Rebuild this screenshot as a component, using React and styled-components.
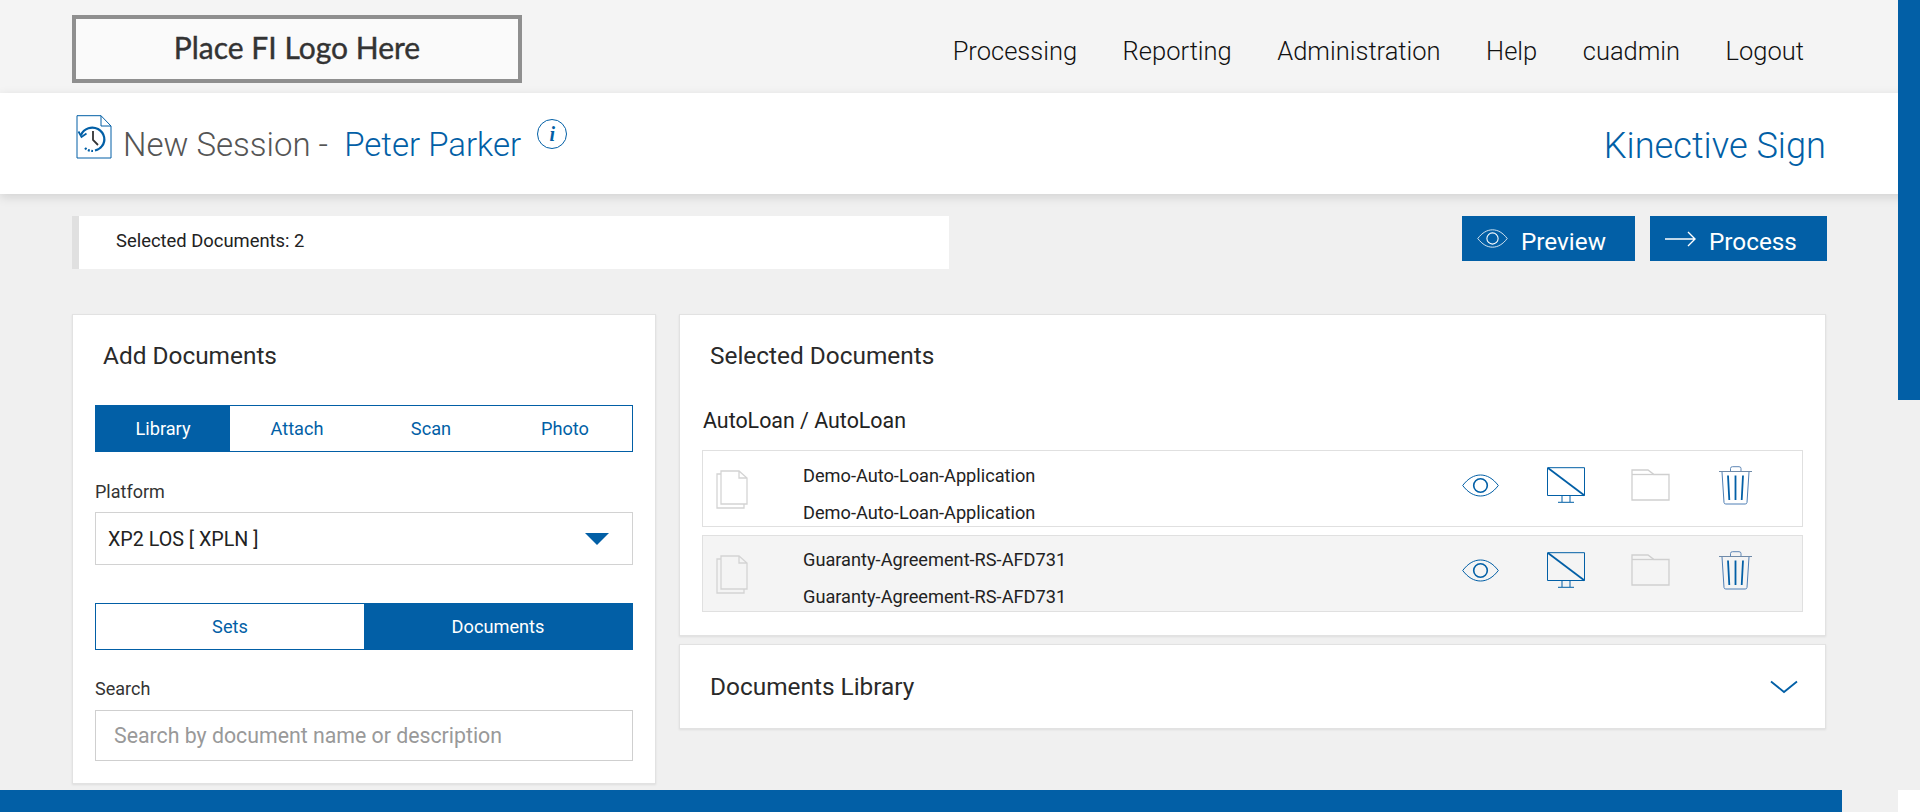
import React from "react";
import styled, { createGlobalStyle } from "styled-components";

const BLUE = "#025fa6";

const Global = createGlobalStyle`
  html, body { margin: 0; padding: 0; height: 100%; overflow: hidden; background: #f0f0f0; }
  body { font-family: Roboto, "Liberation Sans", sans-serif; color: #222; }
  * { box-sizing: border-box; }
`;

const Page = styled.div`
  display: flex;
  flex-direction: column;
  height: 812px;
  overflow: hidden;
`;
const TopBar = styled.header`
  height: 93px;
  flex: none;
  background: #f4f4f4;
  display: flex;
  align-items: center;
  justify-content: space-between;
  padding: 0 116px 0 72px;
`;
const Logo = styled.div`
  width: 450px;
  height: 68px;
  border: 4px solid #8f8f8f;
  background: #fafafa;
  display: flex;
  align-items: center;
  justify-content: center;
  font-family: Lato, sans-serif;
  font-size: 30px;
  font-weight: 400;
  color: #333;
  -webkit-text-stroke: 0.4px #333;
  margin-top: 4px;
  padding-bottom: 4px;
`;
const Nav = styled.nav`
  display: flex;
  gap: 45.5px;
  margin-top: 8px;
`;
const NavLink = styled.a`
  font-size: 25.5px;
  font-weight: 300;
  color: #111;
  line-height: 30px;
`;
const Header = styled.div`
  height: 101px;
  flex: none;
  background: #fff;
  box-shadow: 0 3px 10px rgba(0, 0, 0, 0.13);
  display: flex;
  justify-content: space-between;
  padding: 0 94px 0 76px;
  position: relative;
`;
const HeaderLeft = styled.div`
  display: flex;
  align-items: flex-start;
`;
const Title = styled.h1`
  margin: 32px 0 0 11px;
  font-size: 33px;
  line-height: 40px;
  font-weight: 300;
  color: #555;
  white-space: pre;
`;
const TitleName = styled.span`
  color: ${BLUE};
  font-weight: 300;
`;
const InfoBadge = styled.span`
  width: 30px;
  height: 30px;
  margin: 26px 0 0 16px;
  border: 1px solid ${BLUE};
  border-radius: 50%;
  display: flex;
  align-items: center;
  justify-content: center;
  font-family: "Liberation Serif", serif;
  font-style: italic;
  font-weight: 700;
  font-size: 20px;
  color: ${BLUE};
`;
const Product = styled.div`
  font-size: 36.2px;
  line-height: 40px;
  font-weight: 300;
  color: ${BLUE};
  margin-top: 33px;
`;
const Main = styled.main`
  flex: 1;
  padding: 22px 94px 0 72px;
`;
const ActionRow = styled.div`
  display: flex;
  justify-content: space-between;
  align-items: flex-start;
  height: 53px;
`;
const SelectedBar = styled.div`
  width: 877px;
  height: 53px;
  background: #fff;
  border-left: 7px solid #e0e0e0;
  padding-left: 37px;
  font-size: 18.4px;
  font-weight: 400;
  line-height: 49px;
  color: #222;
`;
const Actions = styled.div`
  display: flex;
  gap: 15px;
  margin-right: -1px;
`;
const ActionButton = styled.button`
  width: ${(p) => p.$w}px;
  height: 45px;
  border: 0;
  background: ${BLUE};
  color: #fff;
  font: 400 24.3px Roboto, sans-serif;
  display: flex;
  align-items: center;
  padding: 6px 0 0 15px;
  gap: ${(p) => p.$gap}px;
`;
const ButtonIcon = styled.span`
  display: flex;
  margin-top: -6px;
`;
const Columns = styled.div`
  display: flex;
  gap: 23px;
  margin-top: 45px;
  align-items: flex-start;
`;
const Card = styled.section`
  background: #fff;
  border: 1px solid #e2e2e2;
  box-shadow: 0 1px 2px rgba(0, 0, 0, 0.08);
`;
const LeftCard = styled(Card)`
  width: 584px;
  height: 470px;
  flex: none;
  padding: 0 22px;
`;
const RightColumn = styled.div`
  flex: 1;
  display: flex;
  flex-direction: column;
  gap: 8px;
`;
const SelectedCard = styled(Card)`
  height: 322px;
  padding: 0 22px;
`;
const CardTitle = styled.h2`
  margin: 24px 0 0 ${(p) => p.$indent}px;
  font-size: 24.4px;
  line-height: 34px;
  font-weight: 400;
  color: #2a2a2a;
`;
const Tabs = styled.div`
  display: flex;
  height: ${(p) => p.$h}px;
  border: 1px solid ${BLUE};
  margin-top: ${(p) => p.$mt}px;
`;
const Tab = styled.div`
  flex: 1;
  display: flex;
  align-items: center;
  justify-content: center;
  font-size: 18.2px;
  color: ${(p) => (p.$active ? "#fff" : BLUE)};
  background: ${(p) => (p.$active ? BLUE : "#fff")};
`;
const FieldLabel = styled.div`
  font-size: 18px;
  line-height: 24px;
  color: #333;
  margin-top: ${(p) => p.$mt}px;
`;
const SelectBox = styled.div`
  height: 53px;
  margin-top: 8px;
  border: 1px solid #d2d2d2;
  display: flex;
  align-items: center;
  justify-content: space-between;
  padding: 1px 23px 0 12px;
  font-size: 19.7px;
  color: #222;
`;
const Caret = styled.span`
  width: 0;
  height: 0;
  border-left: 12px solid transparent;
  border-right: 12px solid transparent;
  border-top: 12px solid ${BLUE};
`;
const SearchBox = styled.div`
  height: 51px;
  margin-top: 9px;
  border: 1px solid #cfcfcf;
  display: flex;
  align-items: center;
  padding-left: 18px;
  font-size: 21.3px;
  color: #999;
`;
const Group = styled.div`
  font-size: 21.4px;
  line-height: 30px;
  color: #222;
  margin: 33px 0 0 1px;
`;
const DocList = styled.div`
  display: flex;
  flex-direction: column;
  gap: 8px;
  margin-top: 14px;
`;
const DocRow = styled.div`
  height: 77px;
  display: flex;
  align-items: flex-start;
  border: 1px solid #e0e0e0;
  background: ${(p) => (p.$alt ? "#f4f4f4" : "#fff")};
  padding-right: 24px;
`;
const DocGlyph = styled.svg`
  width: 32px;
  height: 39px;
  margin: 19px 0 0 13px;
  flex: none;
`;
const DocText = styled.div`
  margin-left: 55px;
  padding-top: ${(p) => (p.$alt ? 5 : 6)}px;
  font-size: 18.2px;
  line-height: 37px;
  color: #222;
`;
const IconGroup = styled.div`
  margin-left: auto;
  display: flex;
  padding-top: 14px;
`;
const IconCell = styled.div`
  width: 85px;
  height: 40px;
  display: flex;
  align-items: center;
  justify-content: center;
`;
const LibraryCard = styled(Card)`
  height: 85px;
  display: flex;
  align-items: center;
  justify-content: space-between;
  padding: 0 27px 0 30px;
`;
const LibraryTitle = styled.h2`
  margin: 0;
  font-size: 24.4px;
  font-weight: 400;
  color: #2a2a2a;
`;
const Footer = styled.footer`
  position: fixed;
  left: 0;
  bottom: 0;
  width: 1842px;
  height: 22px;
  background: ${BLUE};
`;
const ScrollThumb = styled.div`
  position: fixed;
  top: 0;
  right: 0;
  width: 22px;
  height: 400px;
  background: ${BLUE};
`;
const Corner = styled.div`
  position: fixed;
  right: 0;
  bottom: 0;
  width: 22px;
  height: 22px;
  background: #fff;
`;

const HistoryIcon = () => (
  <svg width="36" height="44" viewBox="0 0 36 44" fill="none" style={{ marginTop: 22, flex: "none" }}>
    <path d="M1 .7H25L35 11V43H1Z M25 .7V11H35" stroke={BLUE} strokeWidth="1" fill="#fff" />
    <path d="M5 20C8 13 16 11 22 14C29 18 30 26 26 31C24 34 21 35 19 35.500" stroke={BLUE} strokeWidth="2.200" />
    <path d="M9 33C11 35 14 36 17 36" stroke={BLUE} strokeWidth="2.200" strokeDasharray="2 1.500" />
    <path d="M2.500 16.500L5.500 22L10.500 18.500" stroke={BLUE} strokeWidth="1.800" />
    <path d="M17 16V25L22 30" stroke="#333" strokeWidth="1.800" />
  </svg>
);
const EyeIcon = ({ stroke = BLUE, w = 37, h = 23, r = 1.6 }) => (
  <svg width={w} height={h} viewBox="0 0 37 23" fill="none">
    <path d="M.7 11.500C6 4.500 12 1 18.500 1S31 4.500 36.300 11.500C31 18.500 25 22 18.500 22S6 18.500 .7 11.500Z" stroke={stroke} strokeWidth="1" />
    <circle cx="18.500" cy="11.500" r="6.800" stroke={stroke} strokeWidth={r} />
  </svg>
);
const MonitorIcon = () => (
  <svg width="38" height="36" viewBox="0 0 38 36" fill="none">
    <path d="M.5.7H37.500V28.500H.5Z" stroke={BLUE} strokeWidth="1" />
    <path d="M1 1L37.500 28.500" stroke={BLUE} strokeWidth="1.800" />
    <path d="M15 28.500V35M23 28.500V35M11 35.300H27" stroke={BLUE} strokeWidth="1" />
  </svg>
);
const FolderIcon = () => (
  <svg width="39" height="32" viewBox="0 0 39 32" fill="none" stroke="#cfcfcf" strokeWidth="1.300">
    <path d="M1 31V1H17L23 5.500H38V31Z" />
    <path d="M1 5.500H23" />
  </svg>
);
const TrashIcon = () => (
  <svg width="33" height="39" viewBox="0 0 33 39" fill="none">
    <path d="M11.500 5.500V2.500Q11.500 .7 13.500 .7H20Q22 .7 22 2.500V5.500" stroke="#5f87b5" strokeWidth="1" />
    <path d="M0 5.500H33" stroke="#6f8aa8" strokeWidth="1.200" />
    <path d="M3 6L5 36.500Q5.200 38 6.800 38H26.200Q27.800 38 28 36.500L30 6" stroke="#4f7fb5" strokeWidth="1" />
    <path d="M9 9.500L10.300 34M16.500 9.500V34M24 9.500L22.700 34" stroke={BLUE} strokeWidth="1.800" />
  </svg>
);
const ArrowIcon = () => (
  <svg width="31" height="16" viewBox="0 0 31 16" fill="none" stroke="#fff" strokeWidth="1.400">
    <path d="M0 8H30M23 1L30 8L23 15" />
  </svg>
);
const Pages = () => (
  <DocGlyph viewBox="0 0 32 39" fill="none" stroke="#d4d4d4" strokeWidth="1.300">
    <path d="M5 4H1V38H28V34" />
    <path d="M5 34V1H23L31 8V34Z M23 1V8H31" fill="transparent" />
  </DocGlyph>
);

const docs = [
  { name: "Demo-Auto-Loan-Application", alt: false },
  { name: "Guaranty-Agreement-RS-AFD731", alt: true },
];

export default function App() {
  return (
    <Page>
      <Global />
      <TopBar>
        <Logo>Place FI Logo Here</Logo>
        <Nav>
          {["Processing", "Reporting", "Administration", "Help", "cuadmin", "Logout"].map((n) => (
            <NavLink key={n}>{n}</NavLink>
          ))}
        </Nav>
      </TopBar>
      <Header>
        <HeaderLeft>
          <HistoryIcon />
          <Title>
            New Session -  <TitleName>Peter Parker</TitleName>
          </Title>
          <InfoBadge>i</InfoBadge>
        </HeaderLeft>
        <Product>Kinective Sign</Product>
      </Header>
      <Main>
        <ActionRow>
          <SelectedBar>Selected Documents: 2</SelectedBar>
          <Actions>
            <ActionButton $w={173} $gap={13}>
              <ButtonIcon><EyeIcon stroke="#fff" w={31} h={19} r={1.3} /></ButtonIcon>
              Preview
            </ActionButton>
            <ActionButton $w={177} $gap={13}>
              <ButtonIcon><ArrowIcon /></ButtonIcon>
              Process
            </ActionButton>
          </Actions>
        </ActionRow>
        <Columns>
          <LeftCard>
            <CardTitle $indent={8}>Add Documents</CardTitle>
            <Tabs $h={47} $mt={32}>
              <Tab $active>Library</Tab>
              <Tab>Attach</Tab>
              <Tab>Scan</Tab>
              <Tab>Photo</Tab>
            </Tabs>
            <FieldLabel $mt={28}>Platform</FieldLabel>
            <SelectBox>
              XP2 LOS [ XPLN ]
              <Caret />
            </SelectBox>
            <Tabs $h={47} $mt={38}>
              <Tab>Sets</Tab>
              <Tab $active>Documents</Tab>
            </Tabs>
            <FieldLabel $mt={27}>Search</FieldLabel>
            <SearchBox>Search by document name or description</SearchBox>
          </LeftCard>
          <RightColumn>
            <SelectedCard>
              <CardTitle $indent={8}>Selected Documents</CardTitle>
              <Group>AutoLoan / AutoLoan</Group>
              <DocList>
                {docs.map((d) => (
                  <DocRow key={d.name} $alt={d.alt}>
                    <Pages />
                    <DocText $alt={d.alt}>
                      <div>{d.name}</div>
                      <div>{d.name}</div>
                    </DocText>
                    <IconGroup>
                      <IconCell><EyeIcon /></IconCell>
                      <IconCell><MonitorIcon /></IconCell>
                      <IconCell><FolderIcon /></IconCell>
                      <IconCell><TrashIcon /></IconCell>
                    </IconGroup>
                  </DocRow>
                ))}
              </DocList>
            </SelectedCard>
            <LibraryCard>
              <LibraryTitle>Documents Library</LibraryTitle>
              <svg width="28" height="14" viewBox="0 0 28 14" fill="none" stroke={BLUE} strokeWidth="1.800">
                <path d="M1 1.500L14 12L27 1.500" />
              </svg>
            </LibraryCard>
          </RightColumn>
        </Columns>
      </Main>
      <Footer />
      <ScrollThumb />
      <Corner />
    </Page>
  );
}
